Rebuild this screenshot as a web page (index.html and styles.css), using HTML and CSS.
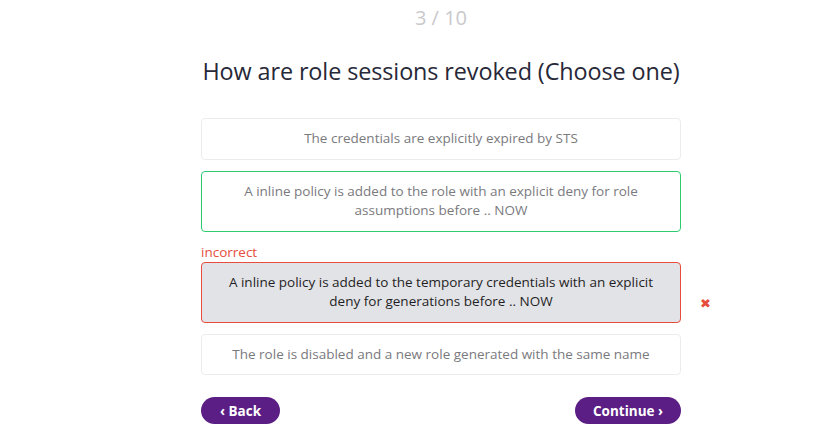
FILE: index.html
```html
<!DOCTYPE html>
<html>
<head>
<meta charset="utf-8">
<link rel="stylesheet" href="styles.css">
</head>
<body>
<main class="quiz">
  <div class="counter">3 / 10</div>
  <h1 class="question">How are role sessions revoked (Choose one)</h1>
  <div class="options">
    <div class="option">The credentials are explicitly expired by STS</div>
    <div class="option correct">A inline policy is added to the role with an explicit deny for role assumptions before .. NOW</div>
    <div class="wrong-wrap">
      <div class="label-incorrect">incorrect</div>
      <div class="option incorrect">A inline policy is added to the temporary credentials with an explicit deny for generations before .. NOW
        <span class="x-mark">✖</span>
      </div>
    </div>
    <div class="option">The role is disabled and a new role generated with the same name</div>
  </div>
  <div class="nav">
    <button class="btn">‹ Back</button>
    <button class="btn">Continue ›</button>
  </div>
</main>
</body>
</html>
```
FILE: styles.css
```css
html, body {
  margin: 0;
  padding: 0;
  background: #fff;
}
body {
  font-family: "Open Sans", "Liberation Sans", sans-serif;
}
.quiz {
  width: 480px;
  margin-left: 201px;
  display: flex;
  flex-direction: column;
}
.counter {
  text-align: center;
  color: #c9c9cc;
  font-size: 20px;
  line-height: 24px;
  margin-top: 6px;
}
.question {
  margin: 26px 0 0;
  text-align: center;
  font-weight: 400;
  font-size: 23.4px;
  line-height: 30px;
  color: #272838;
  letter-spacing: -0.1px;
}
.options {
  margin-top: 32px;
  display: flex;
  flex-direction: column;
  gap: 11px;
}
.option {
  position: relative;
  box-sizing: border-box;
  border: 1px solid #ececee;
  border-radius: 4px;
  padding: 10px 24px;
  text-align: center;
  font-size: 13.5px;
  line-height: 19.5px;
  color: #7a7a7e;
  background: #fff;
}
.option.correct {
  border-color: #2ecc71;
}
.wrong-wrap {
  display: flex;
  flex-direction: column;
}
.label-incorrect {
  color: #e74c3c;
  font-size: 13.5px;
  line-height: 18px;
  margin-bottom: 1px;
}
.option.incorrect {
  border-color: #e74c3c;
  background: #e2e3e7;
  color: #1f1f24;
}
.x-mark {
  position: absolute;
  right: -31px;
  top: 34px;
  color: #e74c3c;
  font-size: 13px;
  line-height: 14px;
  font-family: "DejaVu Sans", sans-serif;
}
.nav {
  margin-top: 22px;
  display: flex;
  justify-content: space-between;
}
.btn {
  border: none;
  background: #5b1e84;
  color: #fff;
  font-family: "Open Sans", "Liberation Sans", sans-serif;
  font-weight: 700;
  font-size: 13.5px;
  height: 27px;
  padding: 0 18px;
  border-radius: 14px;
}
.btn:first-child {
  width: 79px;
}
.btn:last-child {
  width: 106px;
}
```
